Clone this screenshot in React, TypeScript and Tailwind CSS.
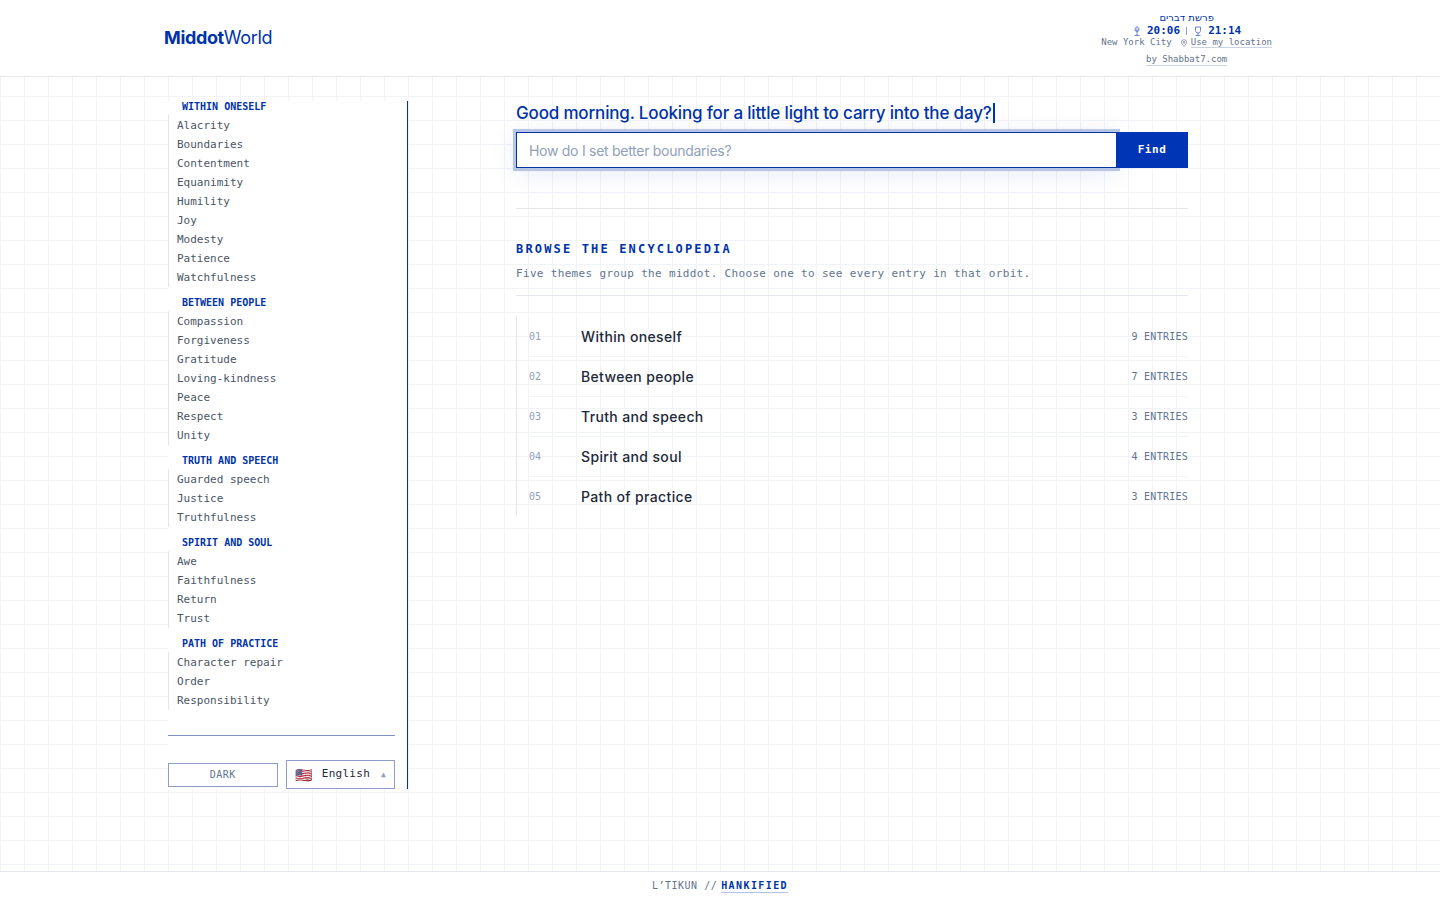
import { useState } from 'react'

type Group = {
  title: string
  label: string
  entries: string[]
}

const groups: Group[] = [
  {
    title: 'WITHIN ONESELF',
    label: 'Within oneself',
    entries: [
      'Alacrity',
      'Boundaries',
      'Contentment',
      'Equanimity',
      'Humility',
      'Joy',
      'Modesty',
      'Patience',
      'Watchfulness',
    ],
  },
  {
    title: 'BETWEEN PEOPLE',
    label: 'Between people',
    entries: ['Compassion', 'Forgiveness', 'Gratitude', 'Loving-kindness', 'Peace', 'Respect', 'Unity'],
  },
  {
    title: 'TRUTH AND SPEECH',
    label: 'Truth and speech',
    entries: ['Guarded speech', 'Justice', 'Truthfulness'],
  },
  {
    title: 'SPIRIT AND SOUL',
    label: 'Spirit and soul',
    entries: ['Awe', 'Faithfulness', 'Return', 'Trust'],
  },
  {
    title: 'PATH OF PRACTICE',
    label: 'Path of practice',
    entries: ['Character repair', 'Order', 'Responsibility'],
  },
]

function CandleIcon() {
  return (
    <svg viewBox="0 0 10 12" className="h-3 w-[10px]" fill="none" stroke="currentColor" aria-hidden="true">
      <path d="M5 1.500C3.500 3 3 3.600 3 4.500a2 2 0 0 0 4 0C7 3.600 6.500 3 5 1.500Z" fill="currentColor" fillOpacity="0.4" />
      <path d="M5 5v5M2.500 10.500h5" />
    </svg>
  )
}

function CupIcon() {
  return (
    <svg viewBox="0 0 10 12" className="h-3 w-[10px]" fill="none" stroke="currentColor" aria-hidden="true">
      <path d="M2.500 2h5v3.500c0 1.500-1 2.500-2.500 2.500s-2.500-1-2.500-2.500Z" />
      <path d="M5 8v2.500M2.500 10.500h5" />
    </svg>
  )
}

function PinIcon() {
  return (
    <svg viewBox="0 0 24 24" className="size-2" fill="none" stroke="currentColor" strokeWidth="2" aria-hidden="true">
      <path d="M12 22c5-5 8-8.500 8-12a8 8 0 0 0-16 0c0 3.500 3 7 8 12Z" />
      <circle cx="12" cy="10" r="3" />
    </svg>
  )
}

function Header() {
  return (
    <header className="border-b border-gray-200 bg-white">
      <div className="mx-auto flex h-[76px] max-w-6xl items-center justify-between pr-6 pl-5">
        <a href="#" className="font-[Inter,sans-serif] text-lg tracking-[-0.02em] text-[#0033a8]">
          <strong className="font-bold">Middot</strong>World
        </a>
        <div className="flex flex-col items-center text-[9px] leading-[11px] text-slate-500">
          <p lang="he" dir="rtl" className="font-['DejaVu_Sans',sans-serif] text-[10px] leading-[15px] text-[#0033a8]">
            פרשת דברים
          </p>
          <p className="flex items-center gap-[5px] text-[11px] leading-3 font-bold text-[#0033a8]">
            <span className="text-[#6683cb]"><CandleIcon /></span>
            <span>20:06</span>
            <span className="mx-px h-2 w-px bg-slate-400" />
            <span className="text-[#6683cb]"><CupIcon /></span>
            <span>21:14</span>
          </p>
          <p className="flex items-center">
            New York City
            <button className="ml-2 flex items-center gap-[3px]">
              <PinIcon />
              <span className="border-b border-slate-300 leading-[10px]">Use my location</span>
            </button>
          </p>
          <a href="#" className="mt-1.5 border-b border-slate-300">by Shabbat7.com</a>
        </div>
      </div>
    </header>
  )
}

function Sidebar({ dark, onToggle }: { dark: boolean; onToggle: () => void }) {
  return (
    <aside className="w-60 shrink-0 self-start border-r border-[#0033a8] bg-white pr-3">
      <nav className="flex flex-col gap-[10px]">
        {groups.map(group => (
          <section key={group.title}>
            <h2 className="mb-0.5 pl-3.5 text-[10px] leading-3 font-bold text-[#0033a8]">{group.title}</h2>
            <ul className="border-l border-gray-200 pt-px pl-2">
              {group.entries.map(entry => (
                <li key={entry} className="text-[11px] leading-[19px] text-gray-600">
                  <a href="#">{entry}</a>
                </li>
              ))}
            </ul>
          </section>
        ))}
      </nav>
      <div className="mt-[25px] grid grid-cols-2 items-center gap-2 border-t border-[#7d93c4] pt-6">
        <button
          onClick={onToggle}
          className="h-6 border border-[#8c9dca] text-[10px] tracking-wider text-slate-500"
        >
          {dark ? 'LIGHT' : 'DARK'}
        </button>
        <button className="flex h-[29px] items-center border border-[#8c9dca] px-2 text-[11px] tracking-wide text-gray-800">
          <span className="mr-2.5 text-sm">🇺🇸</span>
          English
          <span className="ml-auto text-[8px] text-slate-400">▲</span>
        </button>
      </div>
    </aside>
  )
}

export default function App() {
  const [query, setQuery] = useState('')
  const [dark, setDark] = useState(false)

  return (
    <div className="flex min-h-screen flex-col bg-white bg-[linear-gradient(to_right,#f0f3f8_1px,transparent_1px),linear-gradient(to_bottom,#f0f3f8_1px,transparent_1px)] bg-[size:24px_24px] font-['DejaVu_Sans_Mono',monospace]">
      <Header />

      <div className="mx-auto flex w-full max-w-6xl flex-1 gap-6 px-6 pt-6 pb-20">
        <Sidebar dark={dark} onToggle={() => setDark(!dark)} />

        <main className="min-w-0 flex-1">
          <div className="mx-auto max-w-2xl">
            <h1 className="flex items-center font-[Inter,sans-serif] text-[17px] leading-6 font-medium tracking-[-0.01em] text-[#0033a8]">
              Good morning. Looking for a little light to carry into the day?
              <span className="ml-px h-5 w-0.5 bg-[#0033a8]" />
            </h1>

            <form className="mt-[7px] flex h-9" onSubmit={e => e.preventDefault()}>
              <input
                type="text"
                aria-label="Search the encyclopedia"
                value={query}
                onChange={e => setQuery(e.target.value)}
                placeholder="How do I set better boundaries?"
                className="min-w-0 flex-1 border border-[#0033a0] bg-white px-3 pt-0.5 font-[Inter,sans-serif] text-sm tracking-[-0.02em] text-gray-800 shadow-[0_0_0_3px_#b8c6e6,0_4px_28px_rgba(0,51,180,0.1)] outline-none placeholder:text-slate-400"
              />
              <button className="relative -ml-px w-[72px] bg-[#0035b5] text-[11px] font-bold tracking-wider text-white">
                Find
              </button>
            </form>

            <section className="mt-10 border-t border-gray-200 pt-8">
              <h2 className="text-xs leading-4 font-bold tracking-[0.18em] text-[#0033a8]">BROWSE THE ENCYCLOPEDIA</h2>
              <p className="mt-[9px] border-b border-gray-200 pb-[13px] text-[11px] leading-4 tracking-[0.03em] text-slate-500">
                Five themes group the middot. Choose one to see every entry in that orbit.
              </p>

              <ol className="mt-5 border-l border-gray-200 pt-px pl-[11px]">
                {groups.map((group, i) => (
                  <li key={group.title} className="border-b border-slate-100 last:border-b-0">
                    <a href="#" className="flex h-[39px] items-center pl-px">
                      <span className="w-[52px] text-[10px] text-slate-400">{String(i + 1).padStart(2, '0')}</span>
                      <span className="flex-1 font-[Inter,sans-serif] text-sm font-medium tracking-wide text-gray-800">
                        {group.label}
                      </span>
                      <span className="text-[10px] tracking-wide text-slate-500">{group.entries.length} ENTRIES</span>
                    </a>
                  </li>
                ))}
              </ol>
            </section>
          </div>
        </main>
      </div>

      <footer className="flex h-[29px] items-center justify-center gap-1 border-t border-gray-200 bg-white text-[10px] leading-3 tracking-wider text-slate-500">
        L’TIKUN //
        <a href="#" className="border-b border-[#b3c2e5] font-bold tracking-[0.14em] text-[#0033a8]">HANKIFIED</a>
      </footer>
    </div>
  )
}
